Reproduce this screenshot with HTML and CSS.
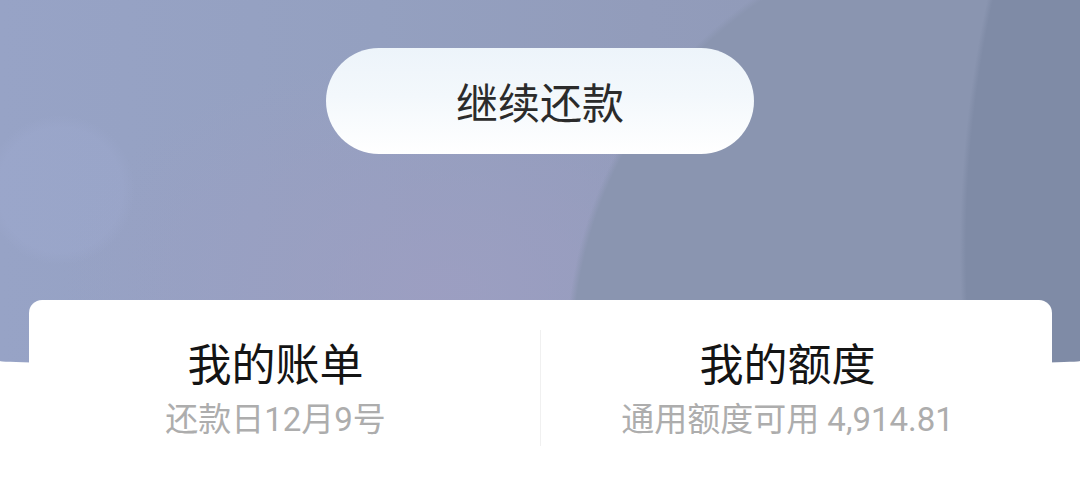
FILE: index.html
```html
<!DOCTYPE html>
<html lang="zh-CN">
<head>
<meta charset="utf-8">
<title>还款</title>
<link rel="stylesheet" href="styles.css">
</head>
<body>
<div class="page">
  <div class="hero">
    <button class="pay-btn" type="button">继续还款</button>
    <div class="card">
      <div class="cell">
        <div class="cell-title">我的账单</div>
        <div class="cell-sub">还款日12月9号</div>
      </div>
      <div class="divider"></div>
      <div class="cell">
        <div class="cell-title">我的额度</div>
        <div class="cell-sub">通用额度可用 4,914.81</div>
      </div>
    </div>
  </div>
</div>
</body>
</html>
```
FILE: styles.css
```css
html, body {
  margin: 0;
  padding: 0;
  background: #ffffff;
}
body {
  width: 1080px;
  height: 487px;
  overflow: hidden;
  font-family: "Noto Sans CJK SC", "Noto Sans", sans-serif;
}
.page {
  width: 1080px;
  height: 487px;
  background: #ffffff;
}
.hero {
  height: 365px;
  display: flex;
  flex-direction: column;
  align-items: center;
  border-radius: 0 0 50% 50% / 0 0 4px 4px;
  background:
    radial-gradient(circle at 60px 190px, rgba(165,176,216,0.22) 0 62px, rgba(165,176,216,0) 75px),
    radial-gradient(circle at 2134px 250px, #7f8ba6 0 1168px, rgba(127,139,166,0) 1174px),
    radial-gradient(circle at 1000px 355px, #8a95b0 0 427px, rgba(138,149,176,0) 434px),
    radial-gradient(ellipse 380px 240px at 440px 290px, rgba(158,158,194,0.8) 0, rgba(158,158,194,0) 100%),
    linear-gradient(90deg, #97a3c6 0%, #94a0c0 35%, #929cbb 60%, #8e98b4 100%);
}
.pay-btn {
  flex-shrink: 0;
  margin-top: 48px;
  width: 428px;
  height: 106px;
  border: none;
  border-radius: 53px;
  background: linear-gradient(180deg, #edf4fa 0%, #f3f8fc 45%, #ffffff 100%);
  color: #2b2b2b;
  font-family: "Noto Sans CJK SC", sans-serif;
  font-size: 42px;
  line-height: 1;
  padding: 0;
  cursor: pointer;
}
.card {
  flex-shrink: 0;
  margin-top: 146px;
  width: 1023px;
  height: 210px;
  background: #ffffff;
  border-radius: 13px;
  display: flex;
  align-items: flex-start;
  box-sizing: border-box;
  padding-top: 34px;
}
.cell {
  flex: 1;
  display: flex;
  flex-direction: column;
  align-items: center;
  padding-right: 17px;
}
.cell-title {
  font-size: 44px;
  line-height: 56px;
  color: #141414;
}
.cell-sub {
  margin-top: 8px;
  font-family: "Roboto", "Noto Sans CJK SC", sans-serif;
  font-size: 33px;
  line-height: 44px;
  color: #adadad;
}
.divider {
  width: 1px;
  height: 116px;
  margin-top: -4px;
  background: #f0f0f0;
}
```
